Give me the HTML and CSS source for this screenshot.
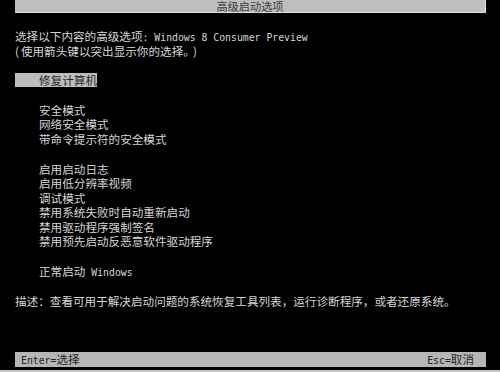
FILE: index.html
```html
<!DOCTYPE html>
<html lang="zh-CN">
<head>
<meta charset="utf-8">
<title>高级启动选项</title>
<link rel="stylesheet" href="styles.css">
</head>
<body>
<div class="screen">
  <div class="titlebar"><span class="title">高级启动选项</span></div>
  <div class="content">
    <div class="intro">
      <div class="line">选择以下内容的高级选项<span class="mono">: Windows 8 Consumer Preview</span></div>
      <div class="line"><span class="paren-open">(</span>使用箭头键以突出显示你的选择。<span class="paren-close">)</span></div>
    </div>
    <div class="group first">
      <div class="line item"><span class="selected">修复计算机</span></div>
    </div>
    <div class="group">
      <div class="line item">安全模式</div>
      <div class="line item">网络安全模式</div>
      <div class="line item">带命令提示符的安全模式</div>
    </div>
    <div class="group">
      <div class="line item">启用启动日志</div>
      <div class="line item">启用低分辨率视频</div>
      <div class="line item">调试模式</div>
      <div class="line item">禁用系统失败时自动重新启动</div>
      <div class="line item">禁用驱动程序强制签名</div>
      <div class="line item">禁用预先启动反恶意软件驱动程序</div>
    </div>
    <div class="group">
      <div class="line item">正常启动<span class="mono"> Windows</span></div>
    </div>
    <div class="group">
      <div class="line">描述：查看可用于解决启动问题的系统恢复工具列表，运行诊断程序，或者还原系统。</div>
    </div>
  </div>
  <div class="footer">
    <span><span class="mono">Enter=</span>选择</span>
    <span><span class="mono">Esc=</span>取消</span>
  </div>
  <div class="baseline"></div>
</div>
</body>
</html>
```

FILE: styles.css
```css
html, body {
  margin: 0;
  padding: 0;
  background: #000;
}
.screen {
  width: 500px;
  height: 372px;
  display: flex;
  flex-direction: column;
  overflow: hidden;
  font-family: "Noto Sans CJK SC", "DejaVu Sans", sans-serif;
  font-size: 11.6px;
  color: #d6d6d6;
}
.mono {
  font-family: "DejaVu Sans Mono", "Liberation Mono", monospace;
  font-size: 9.8px;
}
.titlebar {
  margin: 0 14px 0 15px;
  height: 13px;
  background: #bfbfbf;
  color: #3a3a3a;
  border-right: 1px solid #e0e0e0;
  border-bottom: 1px solid #dcdcdc;
  box-sizing: border-box;
  display: flex;
  justify-content: center;
  align-items: center;
}
.title {
  font-size: 11.2px;
  line-height: 12px;
}
.content {
  padding: 16px 15px 0 15px;
  display: flex;
  flex-direction: column;
}
.line {
  height: 14.5px;
  line-height: 14.5px;
  white-space: nowrap;
}
.paren-open {
  padding-right: 2px;
}
.paren-close {
  padding-left: 4px;
}
.group {
  margin-top: 15.5px;
}
.group.first {
  margin-top: 14.5px;
}
.item {
  padding-left: 24px;
}
.group.first .item {
  padding-left: 0;
}
.selected {
  display: inline-block;
  height: 14px;
  line-height: 14px;
  padding-left: 24px;
  background: #bdbdbd;
  color: #262626;
}
.footer {
  margin: auto 14px 0 15px;
  height: 14.5px;
  line-height: 14.5px;
  background: #b6b6b6;
  color: #242424;
  display: flex;
  justify-content: space-between;
  padding: 0 12px 0 6px;
}
.baseline {
  margin-top: 3.5px;
  height: 2px;
  background: #c4c4c4;
}
```
